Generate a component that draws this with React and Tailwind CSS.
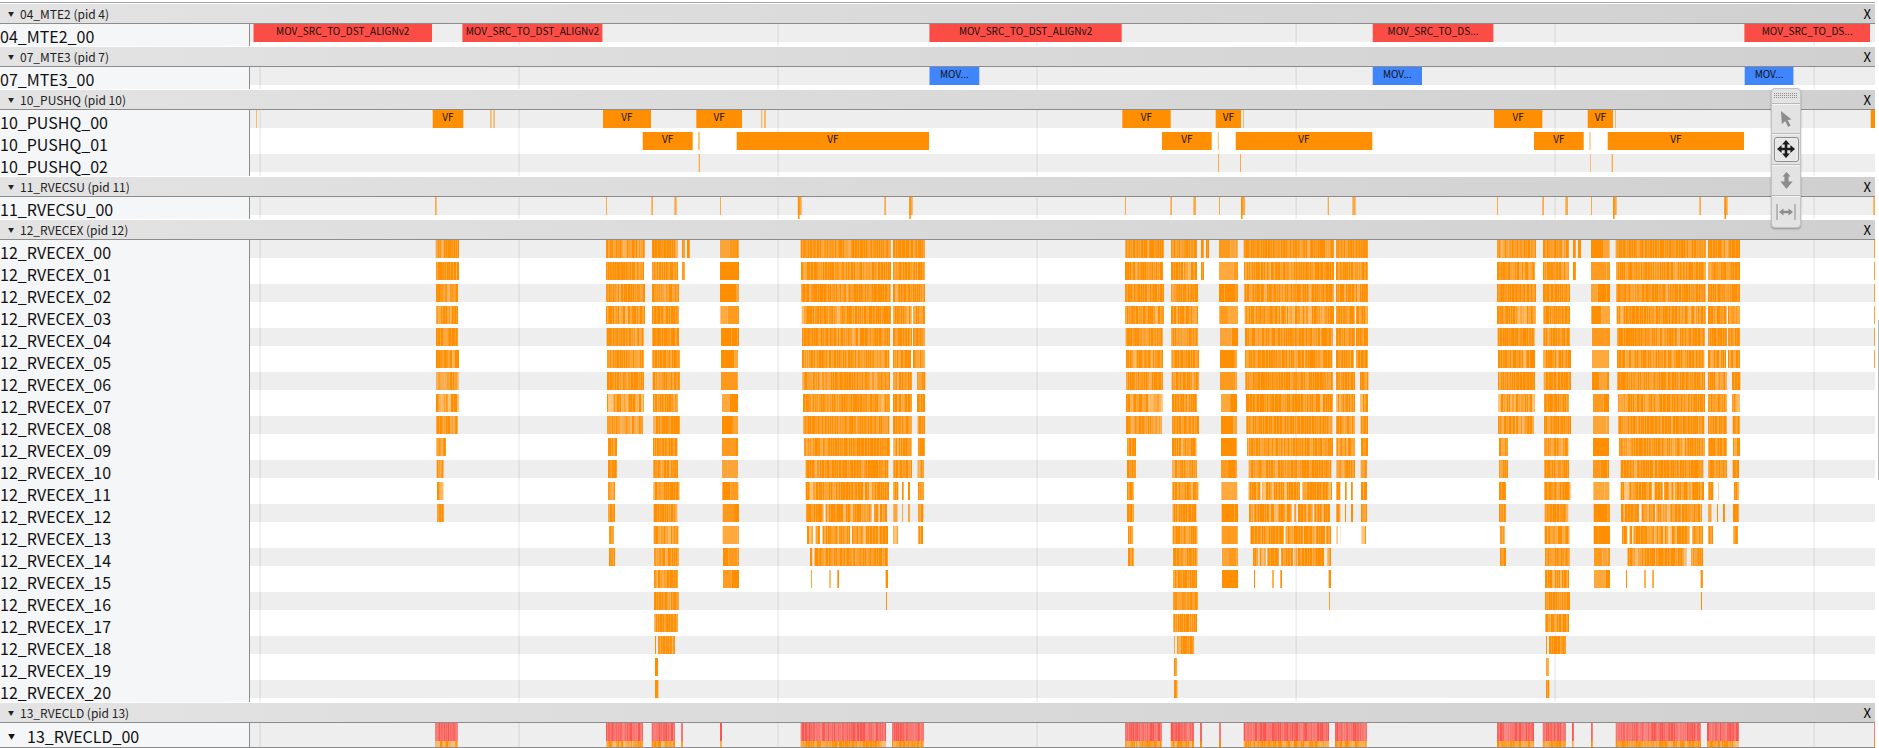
const ORANGE = "#ff8e00";
const RED = "#fb4d46";
const BLUE = "#4085fb";
const GRID_X = [260, 519, 778, 1037, 1296, 1555, 1814];

// slice positions on the 12_RVECEX rows, read off a 3x crop that starts at x=420
const px = (d) => 420 + d / 3;
const COL_A = [[47, 117], [48, 117], [48, 114], [48, 114], [48, 114], [48, 117], [48, 116], [48, 117], [49, 114], [49, 78], [50, 71], [51, 70], [51, 72]];
const COL_B = [[558, 675], [558, 672], [558, 675], [558, 675], [560, 671], [561, 672], [561, 672], [561, 672], [561, 669], [564, 591], [564, 591], [564, 585], [564, 585], [567, 582], [567, 585]];
const COL_C = [
  [[696, 774], [786, 795], [801, 810]],
  [[696, 774], [786, 795]],
  [[696, 777]],
  [[696, 777]],
  [[697, 777]],
  [[697, 780]],
  [[698, 780]],
  [[699, 774]],
  [[699, 780]],
  [[699, 772]],
  [[700, 774]],
  [[700, 778]],
  [[701, 772]],
  [[701, 775]],
  [[702, 776]],
  [[702, 774]],
  [[702, 777]],
  [[703, 774]],
  [[705, 708], [714, 765]],
  [[705, 714]],
  [[705, 715]],
];
const COL_D = [[900, 956], [900, 957], [900, 957], [901, 957], [903, 957], [903, 954], [903, 954], [906, 954], [906, 954], [906, 954], [906, 954], [907, 955], [908, 957], [908, 957], [909, 957], [909, 957]];
const COL_E = [
  [[1142, 1413], [1419, 1515]],
  [[1143, 1413], [1419, 1515]],
  [[1144, 1412], [1419, 1515]],
  [[1145, 1413], [1419, 1475], [1479, 1515]],
  [[1146, 1410], [1419, 1476], [1479, 1515]],
  [[1146, 1408], [1419, 1473], [1479, 1515]],
  [[1147, 1410], [1419, 1476], [1491, 1516]],
  [[1149, 1410], [1419, 1476], [1491, 1515]],
  [[1150, 1408], [1419, 1475], [1493, 1515]],
  [[1152, 1410], [1420, 1476], [1494, 1515]],
  [[1157, 1405], [1420, 1476], [1493, 1512]],
  [[1157, 1407], [1420, 1435], [1446, 1451], [1464, 1470], [1494, 1512]],
  [[1158, 1401], [1420, 1432], [1446, 1449], [1464, 1470], [1494, 1512]],
  [[1161, 1404], [1420, 1434], [1495, 1509]],
  [[1170, 1404]],
  [[1173, 1176], [1228, 1232], [1252, 1257], [1397, 1404]],
  [[1398, 1401]],
];

const OFFSETS = {
  bc: [0, 519, 891],
  d: [0, 499, 871],
  e: [0, 443, 815],
};

const makeRandom = (seed) => {
  let s = seed * 7919 + 13;
  return () => {
    s = (s * 1664525 + 1013904223) >>> 0;
    return s / 4294967296;
  };
};

// the tiny slices of the trace blend into streaks
const Streaks = ({ x0, x1, seed, kind = "n", y = 0, h = 18, fill = ORANGE }) => {
  const rand = makeRandom(seed);
  rand();
  const bars = [];
  let x = x0;
  while (x < x1) {
    const r = rand();
    let w = 0.7 + rand() * 2.2;
    let op = 1;
    if (kind === "n") op = r < 0.74 ? 1 : r < 0.9 ? 0.88 : r < 0.97 ? 0.76 : 0.6;
    if (kind === "p") op = r < 0.48 ? 1 : r < 0.75 ? 0.82 : r < 0.92 ? 0.66 : 0.5;
    if (kind === "s") op = r < 0.7 ? 1 : r < 0.84 ? 0.8 : r < 0.94 ? 0.5 : 0;
    if (kind === "r") op = r < 0.35 ? 0.95 : r < 0.7 ? 0.85 : 0.74;
    if (kind === "f") {
      w = 5 + rand() * 12;
      op = r < 0.4 ? 1 : r < 0.7 ? 0.88 : 0.76;
    }
    const width = Math.min(w, x1 - x);
    if (op > 0) bars.push(<rect key={x} x={x} y={y} width={width} height={h} fill={fill} opacity={op} />);
    x += w;
  }
  return <>{bars}</>;
};

const Track = ({ height = 22, gray = false, strip = 18, children }) => (
  <svg className="block flex-1" width="1625" height={height} viewBox={`250 0 1625 ${height}`}>
    {gray && <rect x="250" y="0" width="1625" height={strip} fill="#eeeeee" />}
    {GRID_X.map((x) => (
      <rect key={x} x={x - 0.6} y="0" width="1.4" height={height} fill="#000000" opacity="0.07" />
    ))}
    {children}
  </svg>
);

const Slice = ({ x0, x1, fill = ORANGE, label }) => (
  <>
    <rect x={x0} y="0" width={x1 - x0} height="18" fill={fill} />
    {label && (
      <text x={(x0 + x1) / 2} y="11" textAnchor="middle" fontSize="10" fill="#111111">
        {label}
      </text>
    )}
  </>
);

const Tick = ({ x0, x1, op = 0.7, h = 18 }) => <rect x={x0} y="0" width={x1 - x0} height={h} fill={ORANGE} opacity={op} />;

const Row = ({ label, gray, height = 22, strip = 18, arrow = false, children }) => (
  <div className="flex">
    <div className="flex w-[250px] shrink-0 items-center border-r border-[#8c8c8c] bg-[#f5f6f8] pt-[2px] text-[16px] leading-none text-[#111111]">
      {arrow && <span className="w-[27px] pl-[8px] text-[7px] leading-none">▼</span>}
      {label}
    </div>
    <Track gray={gray} height={height} strip={strip}>
      {children}
    </Track>
  </div>
);

const Header = ({ title }) => (
  <div className="mt-px flex h-[20px] items-center justify-between border-b border-[#8c8c8c] bg-linear-to-r from-[#e3e3e3] to-[#d0d0d0] pl-[8px] pr-[4px] text-[12px] leading-none text-[#222222]">
    <span className="flex items-center">
      <span className="mr-[6px] text-[6px]">▼</span>
      {title}
    </span>
    <span className="text-[13px] text-black">X</span>
  </div>
);

const MoveIcon = () => (
  <svg width="18" height="18" viewBox="0 0 18 18" fill="#1c1c1c">
    <path d="M9 0 13 4.6H10.3V7.7H13.4V5L18 9 13.4 13V10.3H10.3V13.4H13L9 18 5 13.4H7.7V10.3H4.6V13L0 9 4.6 5V7.7H7.7V4.6H5Z" />
  </svg>
);

const CursorIcon = () => (
  <svg width="11" height="16" viewBox="0 0 11 16" fill="#8c8c8c">
    <path d="M0 0 10.5 8.4 6.6 9 9.6 14.6 7.2 16 4.3 10.2 0.8 13Z" />
  </svg>
);

const ZoomIcon = () => (
  <svg width="13" height="17" viewBox="0 0 13 17" fill="#8c8c8c">
    <path d="M6.5 0 10.5 4.6H8.6V9.4H12.6L6.5 17 0.4 9.4H4.4V4.6H2.5Z" />
  </svg>
);

const WidthIcon = () => (
  <svg width="20" height="16" viewBox="0 0 20 16" fill="#8c8c8c">
    <rect x="0.5" y="0" width="1" height="16" />
    <rect x="18.5" y="0" width="1" height="16" />
    <path d="M3 8 7.5 4.4V6.8H12.5V4.4L17 8 12.5 11.6V9.2H7.5V11.6Z" />
  </svg>
);

const ToolSection = ({ active, height = "h-[31px]", last, children }) => (
  <div
    className={`flex ${height} items-center justify-center ${
      last ? "" : "border-b border-[#b9b9b9] shadow-[0_1px_0_#f4f4f4]"
    }`}
  >
    {active ? (
      <div className="flex h-[25px] w-[25px] items-center justify-center rounded-[3px] border border-[#8e8e8e] bg-[#e6e6e6] shadow-[inset_0_0_2px_#ffffff]">
        {children}
      </div>
    ) : (
      children
    )}
  </div>
);

const MouseModeSelector = () => (
  <div className="absolute left-[1771px] top-[88px] w-[30px] rounded-[4px] border border-[#c4c4c4] bg-[#e3e3e3] shadow-[0_1px_2px_rgba(0,0,0,0.3)]">
    <ToolSection height="h-[15px]">
      <svg className="block" width="24" height="6">
        <defs>
          <pattern id="grip" width="2" height="2" patternUnits="userSpaceOnUse">
            <rect width="1" height="1" fill="#8a8a8a" />
          </pattern>
        </defs>
        <rect width="24" height="6" fill="url(#grip)" />
      </svg>
    </ToolSection>
    <ToolSection height="h-[30px]">
      <CursorIcon />
    </ToolSection>
    <ToolSection active>
      <MoveIcon />
    </ToolSection>
    <ToolSection>
      <ZoomIcon />
    </ToolSection>
    <ToolSection last>
      <WidthIcon />
    </ToolSection>
  </div>
);

const LONG = "MOV_SRC_TO_DST_ALIGNv2";
const SHORT = "MOV_SRC_TO_DS...";

const MTE2_SLICES = [
  [253.5, 432, LONG],
  [462.4, 602.4, LONG],
  [929.4, 1121.7, LONG],
  [1372.7, 1493.4, SHORT],
  [1744.4, 1870, SHORT],
];
const MTE3_SLICES = [
  [929.5, 979.3],
  [1372.7, 1422],
  [1744.7, 1793.4],
];
const PUSHQ_00 = [
  [432.7, 463.3],
  [603, 651],
  [696.3, 742],
  [1122.3, 1170.7],
  [1215.7, 1241],
  [1494, 1542.3],
  [1587.7, 1613],
  [1870.7, 1875],
];
const PUSHQ_00_TICKS = [
  [256, 257],
  [490, 491.7],
  [493.3, 495],
  [761, 762.3],
  [764, 766],
  [1243, 1244],
  [1615, 1616],
];
const PUSHQ_01 = [
  [642.7, 692.7],
  [736.7, 929],
  [1162, 1211.7],
  [1235.7, 1372.3],
  [1534, 1583.7],
  [1607.7, 1744],
];
const PUSHQ_01_TICKS = [
  [698, 700],
  [1217.7, 1219],
  [1589.3, 1590.7],
];
const PUSHQ_02_TICKS = [
  [698.7, 700],
  [1218, 1219],
  [1240, 1241],
  [1590, 1590.7],
  [1611.7, 1613],
];
const RVECSU_TICKS = [
  [435, 436.7],
  [606, 607],
  [651.3, 653],
  [674.3, 676.7],
  [720, 721],
  [797.7, 801.7],
  [884.3, 886],
  [909.3, 912.7],
  [1125, 1126],
  [1170.3, 1172],
  [1193.3, 1196],
  [1219, 1220],
  [1241, 1245],
  [1327.7, 1329],
  [1352.3, 1355.7],
  [1497, 1498],
  [1542.3, 1544],
  [1565.3, 1568],
  [1591, 1592],
  [1613, 1616.7],
  [1699.3, 1701],
  [1724.3, 1727.7],
  [1873.3, 1875],
];
const RVECSU_SUB = [798, 909.3, 1241, 1613, 1724.5];

const RVECLD_BLOCKS = [
  [435.3, 458],
  [606, 643],
  [651.7, 675],
  [681, 683],
  [720, 722],
  [800.7, 886],
  [892, 924],
  [1125, 1162],
  [1170.7, 1194],
  [1200, 1202],
  [1219, 1221],
  [1243.7, 1329],
  [1335, 1367],
  [1497, 1534],
  [1542.7, 1566],
  [1572, 1574],
  [1591, 1593],
  [1615.7, 1701],
  [1707, 1739],
  [1874, 1875],
];

const ExRow = ({ index }) => {
  const blocks = [];
  const add = (segments, offsets, kind, tag) => {
    offsets.forEach((off, g) => {
      segments.forEach(([a, b], i) => {
        blocks.push(
          <Streaks
            key={`${tag}${g}${i}`}
            x0={px(a) + off}
            x1={px(b) + off}
            seed={index * 100 + g * 31 + i * 7 + tag.charCodeAt(0)}
            kind={kind}
          />
        );
      });
    });
  };
  if (COL_A[index]) add([COL_A[index]], [0], index > 4 ? "p" : "n", "a");
  if (COL_B[index]) add([COL_B[index]], OFFSETS.bc, index === 7 || index === 8 ? "p" : "n", "b");
  if (COL_C[index]) add(COL_C[index], OFFSETS.bc, "n", "c");
  if (COL_D[index]) add([COL_D[index]], OFFSETS.d, "f", "d");
  if (COL_E[index]) add(COL_E[index], OFFSETS.e, index >= 11 ? "s" : "n", "e");
  return (
    <Row label={`12_RVECEX_${String(index).padStart(2, "0")}`} gray={index % 2 === 0}>
      {blocks}
      {index < 6 && <Tick x0={1874} x1={1875} op={0.8} />}
    </Row>
  );
};

export default function App() {
  return (
    <div className="relative h-[748px] w-[1879px] overflow-hidden bg-white pr-[4px] pt-[2px] [font-family:'Noto_Sans_CJK_SC',sans-serif]">
      <div className="h-px bg-[#a3a3a3]" />

      <Header title="04_MTE2 (pid 4)" />
      <Row label="04_MTE2_00" gray>
        {MTE2_SLICES.map(([a, b, label]) => (
          <Slice key={a} x0={a} x1={b} fill={RED} label={label} />
        ))}
      </Row>

      <Header title="07_MTE3 (pid 7)" />
      <Row label="07_MTE3_00" gray>
        {MTE3_SLICES.map(([a, b]) => (
          <Slice key={a} x0={a} x1={b} fill={BLUE} label="MOV..." />
        ))}
      </Row>

      <Header title="10_PUSHQ (pid 10)" />
      <Row label="10_PUSHQ_00" gray>
        {PUSHQ_00.map(([a, b]) => (
          <Slice key={a} x0={a} x1={b} label={b - a > 10 ? "VF" : undefined} />
        ))}
        {PUSHQ_00_TICKS.map(([a, b]) => (
          <Tick key={a} x0={a} x1={b} op={0.55} />
        ))}
      </Row>
      <Row label="10_PUSHQ_01">
        {PUSHQ_01.map(([a, b]) => (
          <Slice key={a} x0={a} x1={b} label="VF" />
        ))}
        {PUSHQ_01_TICKS.map(([a, b]) => (
          <Tick key={a} x0={a} x1={b} op={0.5} />
        ))}
      </Row>
      <Row label="10_PUSHQ_02" gray>
        {PUSHQ_02_TICKS.map(([a, b]) => (
          <Tick key={a} x0={a} x1={b} />
        ))}
      </Row>

      <Header title="11_RVECSU (pid 11)" />
      <Row label="11_RVECSU_00" gray>
        {RVECSU_TICKS.map(([a, b]) => (
          <Tick key={a} x0={a} x1={b} />
        ))}
        {RVECSU_SUB.map((x) => (
          <Tick key={x} x0={x} x1={x + 1.5} op={1} h={22} />
        ))}
      </Row>

      <Header title="12_RVECEX (pid 12)" />
      {Array.from({ length: 21 }, (_, i) => (
        <ExRow key={i} index={i} />
      ))}

      <Header title="13_RVECLD (pid 13)" />
      <Row label="13_RVECLD_00" gray arrow height={24} strip={24}>
        {RVECLD_BLOCKS.map(([a, b], i) => (
          <g key={a}>
            <Streaks x0={a} x1={b} seed={500 + i} fill={RED} kind="r" />
            <Streaks x0={a} x1={b} seed={700 + i} y={18} h={6} kind="p" />
          </g>
        ))}
      </Row>
      <div className="h-px bg-[#8c8c8c]" />

      <MouseModeSelector />
      <div className="absolute right-0 top-[320px] h-[160px] w-px bg-[#b5b5b5]" />
    </div>
  );
}
